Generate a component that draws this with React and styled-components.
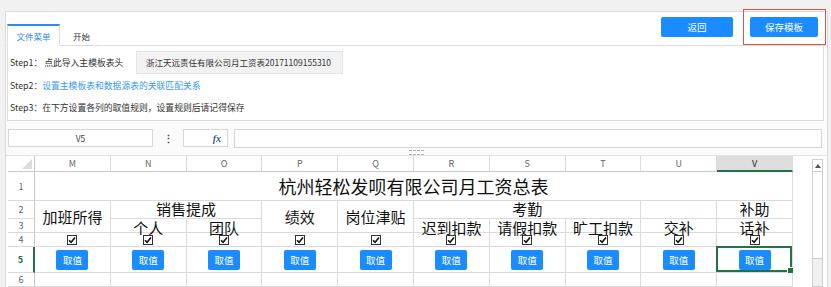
import React from 'react';
import styled, { createGlobalStyle } from 'styled-components';

const GlobalStyle = createGlobalStyle`
    html, body {
        margin: 0;
        padding: 0;
        background: #f1f1f1;
        font-family: "Noto Sans CJK SC", "Noto Sans", sans-serif;
        font-size: 9px;
        color: #333;
    }
    * { box-sizing: border-box; }
`;

const Page = styled.div`
    padding: 11px 3px 0 5px;
    height: 287px;
    overflow: hidden;
`;

const Frame = styled.div`
    background: #fff;
    border: 1px solid #dcdcdc;
    border-bottom: none;
    height: 276px;
    display: flex;
    flex-direction: column;
`;

const TopBar = styled.div`
    height: 34px;
    border-bottom: 1px solid #dcdcdc;
    display: flex;
    justify-content: space-between;
    padding-left: 1px;
    padding-right: 1px;
`;

const Tabs = styled.div`
    display: flex;
    align-self: flex-end;
    margin-bottom: -1px;
`;

const Tab = styled.div`
    height: 22px;
    padding: ${(p) => (p.$active ? '0' : '0 12px')};
    width: ${(p) => (p.$active ? '53px' : 'auto')};
    display: flex;
    align-items: center;
    justify-content: center;
    white-space: nowrap;
    font-size: 8.5px;
    color: ${(p) => (p.$active ? '#2a8cf0' : '#333')};
    background: #fff;
    border-top: 2px solid ${(p) => (p.$active ? '#2a8cf0' : 'transparent')};
    border-left: 1px solid ${(p) => (p.$active ? '#dcdcdc' : 'transparent')};
    border-right: 1px solid ${(p) => (p.$active ? '#dcdcdc' : 'transparent')};
    border-bottom: 1px solid ${(p) => (p.$active ? '#fff' : '#dcdcdc')};
`;

const Actions = styled.div`
    display: flex;
    align-items: flex-start;
    gap: 10px;
`;

const BlueBtn = styled.button`
    width: ${(p) => p.$w}px;
    height: 20px;
    border: none;
    border-radius: 2px;
    background: #1a8cff;
    color: #fff;
    font-family: inherit;
    font-size: 9.5px;
    padding: 0;
    margin-top: ${(p) => p.$top || 0}px;
`;

const Highlight = styled.div`
    margin-top: -3px;
    border: 1px solid #e5533f;
    padding: 7px 7px 7px 6px;
`;

const StepPanel = styled.div`
    margin: 0 3px 0 1px;
    border-left: 1px solid #dcdcdc;
    border-right: 1px solid #dcdcdc;
    border-bottom: 1px solid #dcdcdc;
    padding: 4px 2px 2px;
`;

const StepRow = styled.div`
    display: flex;
    align-items: center;
    height: ${(p) => p.$h || 22}px;
    font-size: 8.8px;
    color: #333;
    white-space: nowrap;
`;

const StepLabel = styled.span`
    width: 126px;
    flex: none;
`;

const Link = styled.span`
    color: #3a9af5;
`;

const FileBox = styled.div`
    height: 23px;
    width: 207px;
    padding-left: 9px;
    display: flex;
    align-items: center;
    background: #f2f2f2;
    border: 1px solid #e4e4e4;
    font-size: 8.5px;
    color: #333;
`;

const FormulaBar = styled.div`
    display: flex;
    align-items: center;
    height: 29px;
    padding: 5px 5px 0 2px;
    background: #fbfbfb;
`;

const NameBox = styled.div`
    width: 145px;
    height: 18px;
    border: 1px solid #d6d6d6;
    background: #fff;
    display: flex;
    align-items: center;
    justify-content: center;
    font-size: 8.5px;
    color: #444;
`;

const Dots = styled.div`
    width: 30px;
    text-align: center;
    font-size: 11px;
    font-weight: bold;
    color: #555;
`;

const FxBox = styled.div`
    width: 45px;
    height: 18px;
    border: 1px solid #d6d6d6;
    background: #fff;
    display: flex;
    align-items: center;
    justify-content: flex-end;
    padding-right: 6px;
    font-family: "Liberation Serif", serif;
    font-style: italic;
    font-weight: bold;
    font-size: 10px;
    color: #2f5f9a;
`;

const FormulaInput = styled.div`
    flex: 1;
    height: 19px;
    margin-left: 6px;
    border: 1px solid #d6d6d6;
    background: #fff;
`;

const Splitter = styled.div`
    height: 5px;
    display: flex;
    justify-content: center;
    align-items: center;
    background: #fbfbfb;
    &::after {
        content: '';
        width: 15px;
        height: 3px;
        border-top: 1px dashed #b5b5b5;
        border-bottom: 1px dashed #b5b5b5;
    }
`;

const SheetArea = styled.div`
    display: flex;
    flex: 1;
    padding-left: 2px;
    border-top: 1px solid #e2e2e2;
`;

const Sheet = styled.div`
    display: grid;
    grid-template-columns: 27px repeat(10, 75.8px);
    grid-template-rows: 16px 29px 18px 14px 14px 26px 14px;
    width: 785px;
    align-content: start;
`;

const Cell = styled.div`
    grid-column: ${(p) => p.$c} / span ${(p) => p.$cs || 1};
    grid-row: ${(p) => p.$r} / span ${(p) => p.$rs || 1};
    border-right: 1px solid #dadada;
    border-bottom: 1px solid #dadada;
    display: flex;
    align-items: center;
    justify-content: center;
    overflow: visible;
    white-space: nowrap;
    position: relative;
    font-size: ${(p) => p.$fs || 15}px;
    line-height: 1;
    color: #111;
`;

const CellText = styled.span`
    display: block;
    transform: translateY(${(p) => p.$dy || 0}px);
`;

const ColHead = styled(Cell)`
    font-size: 9px;
    color: ${(p) => (p.$active ? '#222' : '#666')};
    background: ${(p) => (p.$active ? '#dedede' : '#fff')};
    border-bottom: ${(p) => (p.$active ? '2px solid #217346' : '1px solid #c8c8c8')};
`;

const RowHead = styled(Cell)`
    font-size: 9px;
    color: ${(p) => (p.$active ? '#217346' : '#666')};
    font-weight: ${(p) => (p.$active ? 'bold' : 'normal')};
    border-right: ${(p) => (p.$active ? '2px solid #217346' : '1px solid #c8c8c8')};
`;

const Corner = styled(Cell)`
    border-right: 1px solid #c8c8c8;
    border-bottom: 1px solid #c8c8c8;
    &::after {
        content: '';
        position: absolute;
        right: 2px;
        bottom: 2px;
        border-left: 10px solid transparent;
        border-bottom: 10px solid #dcdcdc;
    }
`;

const Selection = styled.div`
    position: absolute;
    inset: -1px 0 0 -1px;
    border: 2px solid #217346;
    pointer-events: none;
    &::after {
        content: '';
        position: absolute;
        right: -4px;
        bottom: -4px;
        width: 5px;
        height: 5px;
        background: #217346;
        border: 1px solid #fff;
    }
`;

const CheckBox = styled.span`
    width: 10px;
    height: 10px;
    border: 1px solid #333;
    background: #fff;
    display: flex;
    align-items: center;
    justify-content: center;
`;

const TakeBtn = styled.button`
    width: 32px;
    height: 20px;
    border: none;
    border-radius: 2px;
    background: #1a8cff;
    color: #fff;
    font-family: "Noto Sans CJK SC", sans-serif;
    font-size: 9.5px;
    padding: 0;
`;

const ScrollTrack = styled.div`
    margin: 3px 0 0 19px;
    width: 11px;
    border: 1px solid #cfcfcf;
    background: #f0f0f0;
    display: flex;
    flex-direction: column;
`;

const ScrollBtn = styled.div`
    height: 12px;
    background: #fff;
    border-bottom: 1px solid #cfcfcf;
    display: flex;
    align-items: center;
    justify-content: center;
    &::after {
        content: '';
        border-left: 3px solid transparent;
        border-right: 3px solid transparent;
        border-bottom: 4px solid #555;
    }
`;

const ScrollThumb = styled.div`
    height: 87px;
    background: #fff;
    border-bottom: 1px solid #cfcfcf;
`;

const columns = ['M', 'N', 'O', 'P', 'Q', 'R', 'S', 'T', 'U', 'V'];

// grid row 3 = sheet row 2, grid row 4 = sheet row 3
const headers = [
    { c: 2, r: 3, rs: 2, text: '加班所得' },
    { c: 3, r: 3, cs: 2, text: '销售提成', dy: -1 },
    { c: 3, r: 4, text: '个人', dy: 2 },
    { c: 4, r: 4, text: '团队', dy: 2 },
    { c: 5, r: 3, rs: 2, text: '绩效' },
    { c: 6, r: 3, rs: 2, text: '岗位津贴' },
    { c: 7, r: 3, cs: 3, text: '考勤', dy: -1 },
    { c: 7, r: 4, text: '迟到扣款', dy: 2 },
    { c: 8, r: 4, text: '请假扣款', dy: 2 },
    { c: 9, r: 4, text: '旷工扣款', dy: 2 },
    { c: 10, r: 3, text: '' },
    { c: 10, r: 4, text: '交补', dy: 2 },
    { c: 11, r: 3, text: '补助', dy: -1 },
    { c: 11, r: 4, text: '话补', dy: 2 },
];

function Check() {
    return (
        <CheckBox>
            <svg width="8" height="8" viewBox="0 0 8 8">
                <path d="M1 4.2 L3.1 6.3 L7 1.6" fill="none" stroke="#111" strokeWidth="1.6" />
            </svg>
        </CheckBox>
    );
}

export default function App() {
    return (
        <Page>
            <GlobalStyle />
            <Frame>
                <TopBar>
                    <Tabs>
                        <Tab $active>文件菜单</Tab>
                        <Tab>开始</Tab>
                    </Tabs>
                    <Actions>
                        <BlueBtn $w={72} $top={5}>返回</BlueBtn>
                        <Highlight>
                            <BlueBtn $w={68}>保存模板</BlueBtn>
                        </Highlight>
                    </Actions>
                </TopBar>

                <StepPanel>
                    <StepRow $h={24}>
                        <StepLabel>Step1：&nbsp;点此导入主模板表头</StepLabel>
                        <FileBox>浙江天远责任有限公司月工资表20171109155310</FileBox>
                    </StepRow>
                    <StepRow>
                        Step2：<Link>设置主模板表和数据源表的关联匹配关系</Link>
                    </StepRow>
                    <StepRow>Step3：在下方设置各列的取值规则，设置规则后请记得保存</StepRow>
                </StepPanel>

                <FormulaBar>
                    <NameBox>V5</NameBox>
                    <Dots>⋮</Dots>
                    <FxBox>fx</FxBox>
                    <FormulaInput />
                </FormulaBar>
                <Splitter />

                <SheetArea>
                    <Sheet>
                        <Corner $c={1} $r={1} />
                        {columns.map((col, i) => (
                            <ColHead key={col} $c={i + 2} $r={1} $active={col === 'V'}>
                                {col}
                            </ColHead>
                        ))}

                        {[1, 2, 3, 4, 5, 6].map((n) => (
                            <RowHead key={n} $c={1} $r={n + 1} $active={n === 5}>
                                {n}
                            </RowHead>
                        ))}

                        <Cell $c={2} $r={2} $cs={10} $fs={18}>
                            杭州轻松发呗有限公司月工资总表
                        </Cell>

                        {headers.map((h, i) => (
                            <Cell key={i} $c={h.c} $r={h.r} $cs={h.cs} $rs={h.rs}>
                                <CellText $dy={h.dy}>{h.text}</CellText>
                            </Cell>
                        ))}

                        {columns.map((col, i) => (
                            <Cell key={'chk' + col} $c={i + 2} $r={5}>
                                <Check />
                            </Cell>
                        ))}

                        {columns.map((col, i) => (
                            <Cell key={'btn' + col} $c={i + 2} $r={6}>
                                <TakeBtn>取值</TakeBtn>
                                {col === 'V' && <Selection />}
                            </Cell>
                        ))}

                        {columns.map((col, i) => (
                            <Cell key={'r6' + col} $c={i + 2} $r={7} />
                        ))}
                    </Sheet>
                    <ScrollTrack>
                        <ScrollBtn />
                        <ScrollThumb />
                    </ScrollTrack>
                </SheetArea>
            </Frame>
        </Page>
    );
}
